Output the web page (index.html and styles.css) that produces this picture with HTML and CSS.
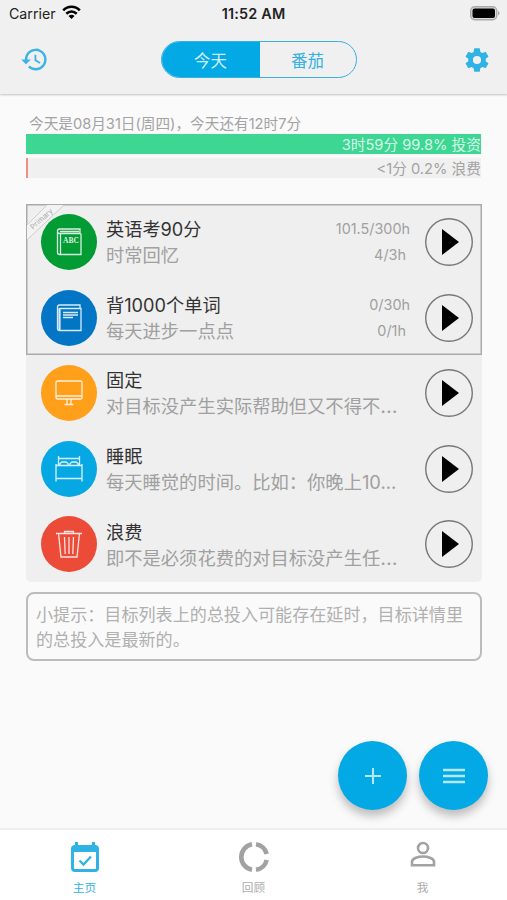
FILE: index.html
```html
<!DOCTYPE html>
<html lang="zh-CN">
<head>
<meta charset="utf-8">
<title>今天</title>
<link rel="stylesheet" href="styles.css">
</head>
<body>
<div class="app">
  <header class="header">
    <div class="status">
      <div class="carrier">Carrier
        <svg class="wifi" width="19" height="15" viewBox="0 0 19 15"><g fill="none" stroke="#000" stroke-width="2.6"><path d="M1.2 5.4C5.8.6 13.200.6 17.800 5.400"/><path d="M4.300 8.700c3-2.900 7.400-2.900 10.400 0"/></g><path d="M9.500 14 6.500 11c1.700-1.600 4.300-1.600 6 0z"/></svg>
      </div>
      <div class="clock">11:52 AM</div>
      <svg class="battery" width="30" height="15" viewBox="0 0 30 15"><rect x=".7" y=".7" width="26" height="13" rx="4" fill="#ddd" stroke="#aaa" stroke-width="1.400"/><rect x="2.500" y="2.500" width="22.500" height="9.500" rx="2"/><path d="M28 4.800q3 2.400 0 4.800z" fill="#aaa"/></svg>
    </div>
    <nav class="toolbar">
      <svg class="tool" width="29" height="29" viewBox="0 0 24 24"><path fill="#39b4e4" d="M13 3a9 9 0 0 0-9 9H1l3.900 3.900.1.100L9 12H6a7 7 0 1 1 2.060 4.940l-1.420 1.420A9 9 0 1 0 13 3zm-1 5v5l4.280 2.540.72-1.210-3.500-2.080V8z"/></svg>
      <div class="segment"><span class="seg on">今天</span><span class="seg">番茄</span></div>
      <svg class="tool" width="28" height="28" viewBox="0 0 24 24"><path fill="#2fb2e4" d="M19.430 12.980c.04-.32.070-.64.070-.98s-.03-.66-.07-.98l2.110-1.650c.19-.15.240-.42.120-.64l-2-3.460c-.12-.22-.39-.3-.61-.22l-2.490 1c-.52-.4-1.080-.73-1.690-.98l-.38-2.650A.49.490 0 0 0 14 2h-4c-.25 0-.46.180-.49.420l-.38 2.650c-.61.250-1.170.59-1.690.98l-2.490-1c-.23-.09-.49 0-.61.220l-2 3.460c-.13.220-.07.490.12.640l2.110 1.650c-.04.320-.07.650-.07.980s.03.660.07.980l-2.110 1.650c-.19.150-.24.420-.12.640l2 3.460c.12.220.39.300.61.220l2.490-1c.52.400 1.080.73 1.690.98l.38 2.650c.03.240.24.420.49.420h4c.25 0 .46-.18.490-.42l.38-2.650c.61-.25 1.170-.59 1.690-.98l2.490 1c.23.090.49 0 .61-.22l2-3.460c.12-.22.070-.49-.12-.64zM12 15.500a3.500 3.500 0 1 1 0-7 3.500 3.500 0 0 1 0 7z"/></svg>
    </nav>
  </header>

  <main class="main">
    <p class="date">今天是08月31日(周四)，今天还有12时7分</p>
    <div class="bar invest">3时59分 99.8% 投资</div>
    <div class="bar waste">&lt;1分 0.2% 浪费</div>

    <section class="list">
      <div class="primary">
        <svg class="ribbon" width="38" height="38" viewBox="0 0 38 38"><path d="M0 19 19 0h18L0 35z" fill="#f3f3f3"/><path d="M0 20 20 0M0 35 37 0" stroke="#ccc" fill="none"/><text x="0" y="0" transform="translate(6 25) rotate(-42)">Primary</text></svg>
        <article class="row">
          <div class="disc green"><svg width="28" height="30" viewBox="0 0 28 30"><path d="M2.500 4v21.500q0 2 2 2H26V6.500M2.500 4q0-2 2-2H25v4.500H4.500q-2 0-2-2.500M5.500 6.500v21M5 4.500h19"/><text class="abc" x="8" y="16.300">ABC</text></svg></div>
          <div class="info"><h2>英语考90分</h2><p>时常回忆</p></div>
          <div class="stats"><span>101.5/300h</span><span class="day">4/3h</span></div>
          <button class="play" aria-label="play"><svg width="17" height="26" viewBox="0 0 17 26"><path d="M0 0 17 13 0 26z"/></svg></button>
        </article>
        <article class="row">
          <div class="disc blue"><svg width="28" height="30" viewBox="0 0 28 30"><path d="M2.500 4v21.500q0 2 2 2H26V5.500H4.500M2.500 4q0-2 2-2H25v3M8 9.500h15M8 12h15M8 14.500h10"/><path d="M4.500 5v22.500" stroke-width="2.200"/></svg></div>
          <div class="info"><h2>背1000个单词</h2><p>每天进步一点点</p></div>
          <div class="stats"><span>0/30h</span><span class="day">0/1h</span></div>
          <button class="play" aria-label="play"><svg width="17" height="26" viewBox="0 0 17 26"><path d="M0 0 17 13 0 26z"/></svg></button>
        </article>
      </div>
      <article class="row">
        <div class="disc orange"><svg width="28" height="30" viewBox="0 0 28 30"><rect x="1" y="3" width="26" height="18" rx="1.500"/><path d="M1 18h26M12 21v5M16 21v5M9.500 26.500h9"/></svg></div>
        <div class="info"><h2>固定</h2><p>对目标没产生实际帮助但又不得不<span class="more">…</span></p></div>
        <button class="play" aria-label="play"><svg width="17" height="26" viewBox="0 0 17 26"><path d="M0 0 17 13 0 26z"/></svg></button>
      </article>
      <article class="row">
        <div class="disc sky"><svg width="28" height="30" viewBox="0 0 28 30"><path d="M3.500 2v9M24.500 2v9M3.500 4.500h21M1 11.500h26v13H1zM1 10v17.500M27 10v17.500M5 11V9.500l2-1.500h4l2 1.500V11M15 11V9.500L17 8h4l2 1.500V11"/></svg></div>
        <div class="info"><h2>睡眠</h2><p>每天睡觉的时间。比如：你晚上10…</p></div>
        <button class="play" aria-label="play"><svg width="17" height="26" viewBox="0 0 17 26"><path d="M0 0 17 13 0 26z"/></svg></button>
      </article>
      <article class="row">
        <div class="disc red"><svg width="28" height="30" viewBox="0 0 28 30"><path d="M1 4.500h26M3.500 4.500 6 28h16l2.500-23.500M9.500 4.500v-2h9v2M9.500 8l.7 17M14 8v17M18.500 8l-.7 17"/></svg></div>
        <div class="info"><h2>浪费</h2><p>即不是必须花费的对目标没产生任<span class="more">…</span></p></div>
        <button class="play" aria-label="play"><svg width="17" height="26" viewBox="0 0 17 26"><path d="M0 0 17 13 0 26z"/></svg></button>
      </article>
    </section>

    <aside class="tip">小提示：目标列表上的总投入可能存在延时，目标详情里的总投入是最新的。</aside>

    <div class="fabs">
      <button class="fab" aria-label="add"><svg width="18" height="18" viewBox="0 0 18 18"><path d="M9 1v16M1 9h16" stroke-width="2"/></svg></button>
      <button class="fab" aria-label="menu"><svg width="22" height="16" viewBox="0 0 22 16"><path d="M0 2h22M0 8h22M0 14h22" stroke-width="2.400"/></svg></button>
    </div>
  </main>

  <footer class="tabs">
    <div class="tab active"><svg width="30" height="32" viewBox="0 0 30 32"><path fill="#2fb2e4" fill-rule="evenodd" d="M5 1h3v3h14V1h3v3q4 0 4 4v19q0 4-4 4H5q-4 0-4-4V8q0-4 4-4zM4 11v16q0 1 1 1h20q1 0 1-1V11z"/><path d="m9.500 19.500 4 4 7.500-8" fill="none" stroke="#2fb2e4" stroke-width="2.300"/></svg><span>主页</span></div>
    <div class="tab"><svg width="32" height="32" viewBox="0 0 32 32"><g fill="none" stroke="#a2a2a2" stroke-width="4.600"><path d="M14 3.200a13 13 0 0 0 0 25.600"/><path d="M18 3.200A13 13 0 0 1 28.700 13"/><path d="M28.700 19A13 13 0 0 1 18 28.800"/></g></svg><span>回顾</span></div>
    <div class="tab me"><svg width="26" height="26" viewBox="0 0 26 26"><g fill="none" stroke="#a2a2a2" stroke-width="2.600"><circle cx="13" cy="7" r="5"/><path d="M2 24.300v-3.500c0-3.600 7-5.300 11-5.300s11 1.700 11 5.300v3.500z"/></g></svg><span>我</span></div>
  </footer>
</div>
</body>
</html>
```

FILE: styles.css
```css
* { box-sizing: border-box; margin: 0; padding: 0; }
body { font-family: Inter, "Noto Sans CJK SC", sans-serif; font-weight: 400; background: #fafafa; }
svg { display: block; flex: none; }
button { font: inherit; }
.app { width: 507px; height: 900px; display: flex; flex-direction: column; overflow: hidden; }

.header { height: 94px; flex: none; background: #f0f0f0; box-shadow: 0 1px 2px rgba(0,0,0,.22); }
.status { height: 27px; display: grid; grid-template-columns: 1fr auto 1fr; align-items: center; padding: 0 7px 0 9px; color: #222; }
.carrier { display: flex; align-items: center; gap: 6px; font-size: 14.200px; }
.wifi { margin-top: -2px; }
.clock { font-size: 14.400px; font-weight: 600; letter-spacing: .2px; margin-left: -2px; }
.battery { justify-self: end; margin-top: -1px; }
.toolbar { height: 65px; display: flex; align-items: center; justify-content: space-between; padding: 0 16px 0 20px; }
.segment { display: flex; width: 196px; height: 37px; border: 1px solid #35b0e0; border-radius: 19px; overflow: hidden; margin-left: 5px; }
.seg { flex: 1; display: flex; align-items: center; justify-content: center; font-size: 16.500px; color: #35b0e0; }
.seg.on { background: #03a9e5; color: #d0effb; flex: 0 0 98px; }

.main { flex: 1; padding: 20px 25px 0 26px; display: flex; flex-direction: column; }
.date { height: 20px; line-height: 21px; padding-left: 3px; font-size: 14.650px; color: #a3a3a3; white-space: nowrap; }
.bar { width: 455px; height: 20px; line-height: 22px; text-align: right; font-size: 14.700px; white-space: nowrap; }
.invest { background: #3dd693; color: #d5f8e8; }
.waste { margin-top: 4px; line-height: 23px; background: #f0f0f0; border-left: 2px solid #f08f88; color: #a3a3a3; }

.list { margin-top: 26px; background: #efefef; border-radius: 0 0 5px 5px; height: 378px; flex: none; }
.primary { position: relative; box-shadow: inset 0 0 0 1.500px #aaa; height: 151px; }
.ribbon { position: absolute; left: 1px; top: 1px; }
.ribbon text { font-size: 7.500px; fill: #aaa; }
.row { position: relative; height: 75.700px; display: flex; align-items: center; padding: 0 9px 0 15px; }
.disc { width: 56px; height: 56px; border-radius: 50%; flex: none; display: flex; align-items: center; justify-content: center; }
.disc svg { fill: none; stroke: #fff; stroke-width: 1.300; opacity: .85; }
.disc .abc { font: 700 7.500px "Liberation Serif", serif; fill: #fff; stroke: none; }
.green { background: #029b34; }
.blue { background: #0276c5; }
.orange { background: #ff9f1a; }
.sky { background: #05a8e3; }
.red { background: #ec4b38; }
.info { flex: 1; min-width: 0; margin: 2px 0 0 9px; white-space: nowrap; }
.info h2 { font-size: 18.200px; font-weight: 400; line-height: 25px; color: #333; }
.info p { font-size: 18.300px; line-height: 26px; color: #a0a0a0; }
.more { letter-spacing: 1px; font-size: 20px; line-height: 1; }
.stats { display: flex; flex-direction: column; align-items: flex-end; margin-right: 15px; font-size: 14.400px; line-height: 25.500px; color: #a0a0a0; }
.day { padding-right: 4px; }
.play { width: 48px; height: 48px; flex: none; border: 0; box-shadow: inset 0 0 0 1.400px #777; border-radius: 50%; background: none; display: flex; align-items: center; justify-content: center; padding-left: 3px; }

.tip { margin-top: 10px; height: 69px; flex: none; width: 456px; border: 2px solid #bcbcbc; border-radius: 8px; padding: 9px 12px 0 8px; font-size: 17.080px; line-height: 24.500px; color: #b0b0b0; }

.fabs { display: flex; justify-content: flex-end; gap: 12px; margin: 80px -6px 0 0; }
.fab { width: 69px; height: 69px; border: 0; border-radius: 50%; background: #03a9e5; display: flex; align-items: center; justify-content: center; box-shadow: 0 6px 10px rgba(0,0,0,.25); }
.fab svg { stroke: #b5e8fa; fill: none; }

.tabs { height: 72px; flex: none; background: #fff; border-top: 2px solid #eee; display: grid; grid-template-columns: repeat(3, 1fr); }
.tab { display: flex; flex-direction: column; align-items: center; padding-top: 11px; font-size: 11.700px; line-height: 16px; color: #adadad; }
.tab span { margin-top: 7px; }
.tab.active { color: #2fb2e4; }
.tab.me span { margin-top: 13px; }
```
